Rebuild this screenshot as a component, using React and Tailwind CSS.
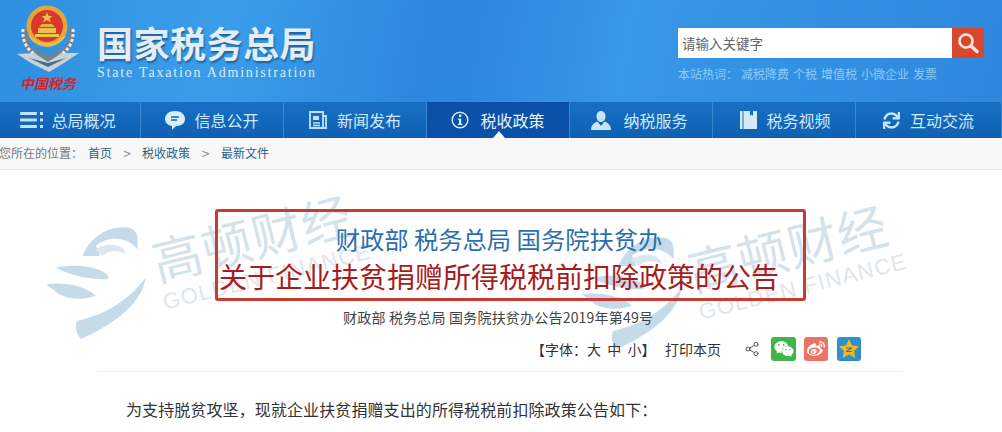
import React from 'react';
import { FaSync, FaWeixin, FaWeibo } from 'react-icons/fa';
import { Share2 } from 'lucide-react';

const cjk = { fontFamily: '"Noto Sans CJK SC", "Liberation Sans", sans-serif' };

function Emblem() {
  return (
    <svg width="64" height="68" viewBox="0 0 64 68" className="block">
      <path d="M10 20 C3 32 6 46 18 54 L32 60 L46 54 C58 46 61 32 54 20 L50 42 L32 50 L14 42Z" fill="#6f8494" />
      <path d="M7 24 C6 36 11 45 20 50 M57 24 C58 36 53 45 44 50" fill="none" stroke="#e6ecf0" strokeWidth="3" strokeDasharray="3 2" />
      <path d="M1 49 L18 48 L32 57 L46 48 L63 48 L48 58 L33 67 L15 58Z" fill="#c7d3da" />
      <path d="M13 53 L32 62 L50 53 L32 58Z" fill="#4f6a7d" />
      <circle cx="31" cy="21" r="20.500" fill="#e2a63c" />
      <circle cx="31" cy="21" r="16" fill="#d8392b" />
      <path d="M31 7 l1.600 4 4 0 -3.200 2.500 1.600 4 -4 -2.500 -4 2.500 1.600 -4 -3.200 -2.500 4 0z" fill="#f0c04c" />
      <path d="M19 29 H43 V32 H19Z M22 23 H40 V28 H22Z" fill="#f0c04c" />
      <path d="M23 22 H39 L36 19 H26Z" fill="#e9b044" />
      <path d="M12 30 C16 39 25 41 31 42 C37 41 46 39 50 30 L45 33 C41 37 36 38 31 38 C26 38 21 37 17 33Z" fill="#eebb4b" />
    </svg>
  );
}

// coordinates follow the logo at 3x, so it scales down to about 103px wide
function Swoosh() {
  return (
    <svg width="103" height="113" viewBox="0 0 310 340" className="block">
      <g fill="#c6dbe9">
        <path d="M110 90 C130 35 190 -5 250 5 C272 10 280 30 275 70 C250 35 190 25 150 60 C160 75 165 85 160 90Z" />
        <path d="M30 125 C80 115 140 120 165 135 C190 145 195 160 180 160 C130 160 70 150 30 125Z" />
        <path d="M0 175 C50 170 110 175 150 210 C110 225 70 220 40 205Z" />
        <path d="M300 155 C290 225 220 290 105 340 C90 320 85 300 95 285 C170 270 250 225 300 155Z" />
      </g>
      <path d="M150 70 C190 45 235 55 240 85 C215 70 185 75 170 90Z" fill="#dbe8f1" />
    </svg>
  );
}

function Watermark({ className }) {
  return (
    <div className={`absolute flex items-center ${className}`}>
      <Swoosh />
      <div className="ml-1 flex -translate-y-[34px] -rotate-[14deg] flex-col">
        <span className="whitespace-nowrap text-[50px] leading-none tracking-[1px] text-[#d4e2ec]" style={cjk}>高顿财经</span>
        <span className="mt-[8px] whitespace-nowrap text-[22px] leading-none tracking-[1.300px] text-[#dfe6ec]" style={{ fontFamily: '"Liberation Sans", sans-serif' }}>GOLDEN FINANCE</span>
      </div>
    </div>
  );
}

const navItems = [
  {
    label: '总局概况',
    gap: 'gap-[8px] pr-[4px]',
    icon: (
      <svg width="23" height="16" viewBox="0 0 23 16" fill="#bfe4f5">
        <rect x="0" y="0" width="17" height="3" rx="1" /><rect x="0" y="6.500" width="17" height="3" rx="1" /><rect x="0" y="13" width="17" height="3" rx="1" />
        <rect x="20" y="0" width="3" height="3" /><rect x="20" y="6.500" width="3" height="3" /><rect x="20" y="13" width="3" height="3" />
      </svg>
    ),
  },
  {
    label: '信息公开',
    gap: 'gap-[9px]',
    icon: (
      <svg width="20" height="19" viewBox="0 0 20 19">
        <path d="M10 0 C16 0 20 3.500 20 8 C20 12.500 16 15 11 15 L7 19 L7 15 C3 14.500 0 12 0 8 C0 3.500 4 0 10 0Z" fill="#d6eefa" />
        <path d="M6 6 H14 M6 9 H12" stroke="#1566b8" strokeWidth="1.500" />
      </svg>
    ),
  },
  {
    label: '新闻发布',
    gap: 'gap-[10px]',
    icon: (
      <svg width="18" height="18" viewBox="0 0 18 18" fill="none" stroke="#bfe4f5">
        <path d="M1 1 H14 V17 H1Z M14 5 H17 V17 H14" strokeWidth="1.800" />
        <path d="M4 5 H10 V9 H4Z" fill="#bfe4f5" stroke="none" />
        <path d="M4 12 H11 M4 14.500 H11" strokeWidth="1.400" />
      </svg>
    ),
  },
  {
    label: '税收政策',
    gap: 'gap-[11px]',
    active: true,
    icon: (
      <svg width="18" height="18" viewBox="0 0 18 18" fill="none">
        <circle cx="9" cy="9" r="7.800" stroke="#d6eefa" strokeWidth="1.500" />
        <rect x="8" y="3.500" width="2.400" height="2.400" fill="#d6eefa" />
        <path d="M6.800 7.500 H10.200 V12.800 H11.500 V14 H6.800 V12.800 H8 V8.700 H6.800Z" fill="#d6eefa" />
      </svg>
    ),
  },
  {
    label: '纳税服务',
    gap: 'gap-[12px] pr-[3px]',
    icon: (
      <svg width="20" height="19" viewBox="0 0 20 19" fill="#c6e5f5">
        <path d="M10 0 C13 0 14.500 2.500 14.500 5.500 C14.500 8.500 12.500 11 10 11 C7.500 11 5.500 8.500 5.500 5.500 C5.500 2.500 7 0 10 0Z" />
        <path d="M6.500 10.500 L10 15 L13.500 10.500 C17 12 20 14 20 19 H0 C0 14 3 12 6.500 10.500Z" />
      </svg>
    ),
  },
  {
    label: '税务视频',
    gap: 'gap-[9px] pl-[3px]',
    icon: (
      <svg width="17" height="18" viewBox="0 0 17 18" fill="#d3ebf8">
        <path d="M0 0 H2.500 V18 H0Z M3.500 0 H10 V5 L11.500 3.500 L13 5 V0 H17 V18 H3.500Z" />
      </svg>
    ),
  },
  {
    label: '互动交流',
    gap: 'gap-[10px]',
    icon: <FaSync className="text-[17px] text-[#c6e5f5]" />,
  },
];

function NavBar() {
  return (
    <nav className="grid h-9 grid-cols-[141px_143px_143px_143px_143px_143px_146px] bg-gradient-to-b from-[#1770c6] to-[#0f60b2]" style={cjk}>
      {navItems.map((item) => (
        <div
          key={item.label}
          className={`relative flex items-center justify-center border-r border-[#3b85cf] text-base ${item.gap} ${
            item.active ? 'bg-[#0a4fa8] text-[#eaf5fb]' : 'text-[#cfe9f7]'
          }`}
        >
          {item.icon}
          <span>{item.label}</span>
          {item.active && (
            <span className="absolute bottom-0 left-[66px] h-0 w-0 border-x-[6px] border-b-[7px] border-x-transparent border-b-[#f7f7f7]" />
          )}
        </div>
      ))}
    </nav>
  );
}

function Header() {
  return (
    <header className="flex h-[102px] bg-[linear-gradient(100deg,#2f8fe0_0%,#3a9dea_22%,#2d86dd_45%,#3797e8_62%,#2f88de_100%)]">
      <div className="ml-[15px] mt-[5px] flex w-[66px] flex-col items-center">
        <Emblem />
        <span className="whitespace-nowrap text-[14px] font-bold italic leading-[20px] text-[#d4272b]" style={{ fontFamily: '"Noto Sans CJK SC", serif' }}>中国税务</span>
      </div>
      <div className="ml-[16px] mt-[22px] w-[225px]">
        <div className="whitespace-nowrap text-[36px] font-bold leading-[40px] tracking-[0.500px] text-[#e4edf4] [text-shadow:1px_2px_2px_#1d5f9e]" style={cjk}>国家税务总局</div>
        <div className="mt-[1px] whitespace-nowrap text-[14px] leading-5 tracking-[1.800px] text-[#dcebf6]" style={{ fontFamily: '"Liberation Serif", serif' }}>State Taxation Administration</div>
      </div>
      <div className="ml-[356px] mt-[28px] w-[306px]">
        <div className="flex h-[30px]">
          <div className="flex w-[274px] items-center bg-white pl-[4px] text-[13.500px] text-[#666666]" style={cjk}>请输入关键字</div>
          <div className="flex w-[32px] items-center justify-center bg-[#d9472f]">
            <svg width="22" height="22" viewBox="0 0 22 22" fill="none">
              <circle cx="9" cy="9" r="6.500" stroke="#f8e6da" strokeWidth="2.600" />
              <path d="M14 14 L20 19.500" stroke="#f8e6da" strokeWidth="3.500" strokeLinecap="round" />
            </svg>
          </div>
        </div>
        <div className="mt-[8px] flex whitespace-nowrap text-xs leading-4 text-[#8bcdf4]" style={cjk}>
          <span className="w-[63px]">本站热词：</span>
          <span className="flex gap-[4px]">
            <span>减税降费</span><span>个税</span><span>增值税</span><span>小微企业</span><span>发票</span>
          </span>
        </div>
      </div>
    </header>
  );
}

function Breadcrumb() {
  return (
    <div className="flex h-8 items-center border-b border-[#e6e6e6] bg-[#f7f7f7] pb-[2px] text-xs text-[#2c5f82]" style={cjk}>
      <span className="-ml-px w-[89px] text-[#777777]">您所在的位置：</span>
      <span>首页</span>
      <span className="w-[30px] text-center text-sm text-[#888888]">&gt;</span>
      <span>税收政策</span>
      <span className="w-[31px] text-center text-sm text-[#888888]">&gt;</span>
      <span>最新文件</span>
    </div>
  );
}

function Article() {
  return (
    <main className="relative flex-1 overflow-hidden bg-white" style={cjk}>
      <Watermark className="left-[46px] top-[56px]" />
      <Watermark className="left-[582px] top-[66px]" />

      <div className="relative ml-[215px] mt-[39px] flex h-[92px] w-[591px] flex-col items-center rounded-[3px] border-[3px] border-[#c93a32] pr-[23px] pt-[9px]">
        <div className="whitespace-pre text-[24.300px] leading-[36px] text-[#2a6fae]">财政部 税务总局 国务院扶贫办</div>
        <div className="mt-[1px] whitespace-nowrap text-[28px] leading-[36px] text-[#a81c20]">关于企业扶贫捐赠所得税税前扣除政策的公告</div>
      </div>

      <div className="relative mt-[6px] pl-[343px] text-sm leading-5 tracking-[0.200px] text-[#444444]">财政部 税务总局 国务院扶贫办公告2019年第49号</div>

      <div className="relative ml-[97px] mt-[9px] flex h-9 w-[806px] items-center border-b border-[#eeeeee] pb-[10px] text-sm text-[#333333]">
        <span className="ml-[434px] w-[134px] whitespace-pre">【字体：大  中  小】</span>
        <span>打印本页</span>
        <Share2 size={16} strokeWidth={1.300} className="ml-[23px] text-[#444444]" />
        <span className="ml-[11px] flex h-6 w-[25px] items-center justify-center rounded-[3px] bg-[#3fb54a] text-white">
          <FaWeixin size={20} />
        </span>
        <span className="ml-2 flex h-6 w-6 items-center justify-center rounded-[3px] bg-[#ec7167] text-white">
          <FaWeibo size={18} />
        </span>
        <span className="ml-[9px] flex h-6 w-6 items-center justify-center rounded-[3px] bg-[#2b8fd0]">
          <svg width="20" height="19" viewBox="0 0 20 19">
            <path d="M10 0 L13 6.500 L20 7.200 L15 12 L16.300 19 L10 15.500 L3.700 19 L5 12 L0 7.200 L7 6.500Z" fill="#f2b91f" />
            <path d="M7 8.500 H13 V9.500 L9 12 H13 V13 H7 V12 L11 9.500 H7Z" fill="#3a6fb0" />
          </svg>
        </span>
      </div>

      <p className="relative ml-[126px] mt-[25px] text-base leading-6 tracking-[0.100px] text-[#333333]">为支持脱贫攻坚，现就企业扶贫捐赠支出的所得税税前扣除政策公告如下：</p>
    </main>
  );
}

export default function App() {
  return (
    <div className="flex h-[432px] w-[1002px] flex-col overflow-hidden">
      <Header />
      <NavBar />
      <Breadcrumb />
      <Article />
    </div>
  );
}
